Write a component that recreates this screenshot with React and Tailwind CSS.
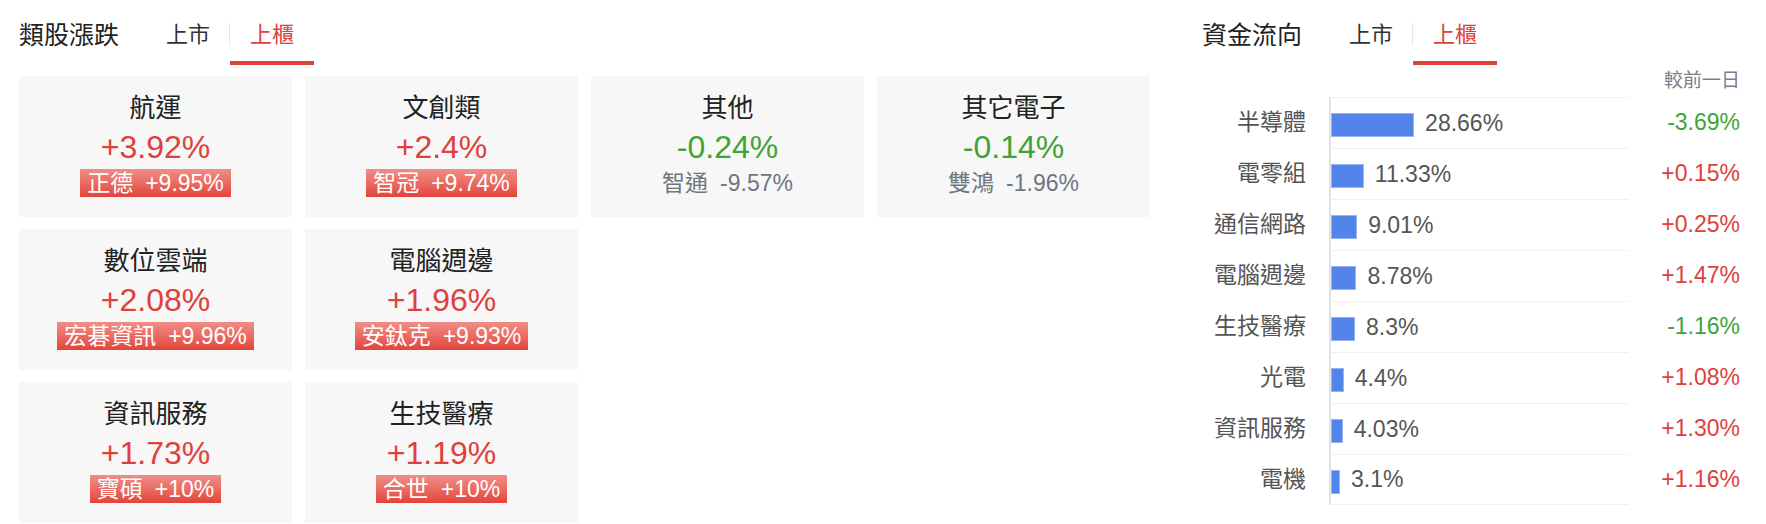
import React from 'react';

// 類股漲跌卡片資料
const sectors = [
  { name: '航運', pct: '+3.92%', up: true, lead: { name: '正德', pct: '+9.95%', hot: true } },
  { name: '文創類', pct: '+2.4%', up: true, lead: { name: '智冠', pct: '+9.74%', hot: true } },
  { name: '其他', pct: '-0.24%', up: false, lead: { name: '智通', pct: '-9.57%', hot: false } },
  { name: '其它電子', pct: '-0.14%', up: false, lead: { name: '雙鴻', pct: '-1.96%', hot: false } },
  { name: '數位雲端', pct: '+2.08%', up: true, lead: { name: '宏碁資訊', pct: '+9.96%', hot: true } },
  { name: '電腦週邊', pct: '+1.96%', up: true, lead: { name: '安鈦克', pct: '+9.93%', hot: true } },
  null,
  null,
  { name: '資訊服務', pct: '+1.73%', up: true, lead: { name: '寶碩', pct: '+10%', hot: true } },
  { name: '生技醫療', pct: '+1.19%', up: true, lead: { name: '合世', pct: '+10%', hot: true } },
];

// 資金流向
const flows = [
  { name: '半導體', share: 28.66, diff: '-3.69%' },
  { name: '電零組', share: 11.33, diff: '+0.15%' },
  { name: '通信網路', share: 9.01, diff: '+0.25%' },
  { name: '電腦週邊', share: 8.78, diff: '+1.47%' },
  { name: '生技醫療', share: 8.3, diff: '-1.16%' },
  { name: '光電', share: 4.4, diff: '+1.08%' },
  { name: '資訊服務', share: 4.03, diff: '+1.30%' },
  { name: '電機', share: 3.1, diff: '+1.16%' },
];

const Header = ({ title }) => (
  <div className="flex h-[65px]">
    <div className="mt-[21px] text-[25px] leading-[28px] text-[#222]">{title}</div>
    <div className="ml-[28px] flex">
      <div className="flex w-[82px] flex-col items-center pt-[23px]">
        <span className="text-[22px] leading-[23px] text-[#333]">上市</span>
      </div>
      <div className="mt-[23px] h-[23px] w-px bg-[#e6e6e6]" />
      <div className="flex w-[84px] flex-col items-center pt-[23px]">
        <span className="text-[22px] leading-[23px] text-[#e0403b]">上櫃</span>
        <div className="mt-[15px] h-[4px] w-full bg-[#e0403b]" />
      </div>
    </div>
  </div>
);

const SectorCard = ({ s }) => {
  if (!s) return <div />;
  return (
    <div className="flex h-[141px] flex-col items-center bg-[#f7f7f7] pt-[15px]">
      <div className="text-[26px] leading-[34px] text-[#222]">{s.name}</div>
      <div className={`mt-[3px] text-[32px] leading-[38px] ${s.up ? 'text-[#e0403b]' : 'text-[#3fa435]'}`}>
        {s.pct}
      </div>
      {s.lead.hot ? (
        <div className="mt-[3px] flex h-[28px] items-center gap-3 bg-linear-to-b from-[#ef8d88] to-[#e3423a] px-[7px] text-[23px] leading-[28px] text-white">
          <span>{s.lead.name}</span>
          <span>{s.lead.pct}</span>
        </div>
      ) : (
        <div className="mt-[3px] flex h-[28px] items-center gap-3 px-[7px] text-[23px] leading-[28px] text-[#6f7682]">
          <span>{s.lead.name}</span>
          <span>{s.lead.pct}</span>
        </div>
      )}
    </div>
  );
};

export default function App() {
  return (
    <div
      className="flex h-[524px] w-[1766px] bg-white pl-[19px]"
      style={{ fontFamily: '"Liberation Sans", "Noto Sans CJK TC", sans-serif' }}
    >
      <div className="w-[1131px]">
        <Header title="類股漲跌" />
        <div className="mt-[11px] grid grid-cols-[repeat(4,273px)] gap-x-[13px] gap-y-[12px]">
          {sectors.map((s, i) => (
            <SectorCard key={i} s={s} />
          ))}
        </div>
      </div>

      <div className="ml-[52px] w-[538px]">
        <Header title="資金流向" />
        <div className="h-[32px] text-right text-[19px] leading-[32px] text-[#7a8089]">較前一日</div>
        <div className="flex flex-col">
          {flows.map((f, i) => (
            <div key={f.name} className="flex h-[51px] items-center">
              <div className="w-[104px] text-right text-[23px] text-[#555]">{f.name}</div>
              <div
                className={`ml-[23px] flex h-full w-[300px] items-center border-l-2 border-t border-l-[#e2e2e2] border-t-[#f0f0f0] ${
                  i === flows.length - 1 ? 'border-b border-b-[#f0f0f0]' : ''
                }`}
              >
                <div className="mt-1 flex w-[290px] items-center">
                  <div
                    className="h-[24px] shrink-0 border border-[#95b4f3] bg-[#5384ea]"
                    style={{ width: `${f.share}%` }}
                  />
                  <span className="-mt-1 ml-[11px] text-[23px] text-[#555]">{f.share}%</span>
                </div>
              </div>
              <div
                className={`flex-1 text-right text-[23px] ${
                  f.diff.startsWith('-') ? 'text-[#3fa435]' : 'text-[#e0403b]'
                }`}
              >
                {f.diff}
              </div>
            </div>
          ))}
        </div>
      </div>
    </div>
  );
}
